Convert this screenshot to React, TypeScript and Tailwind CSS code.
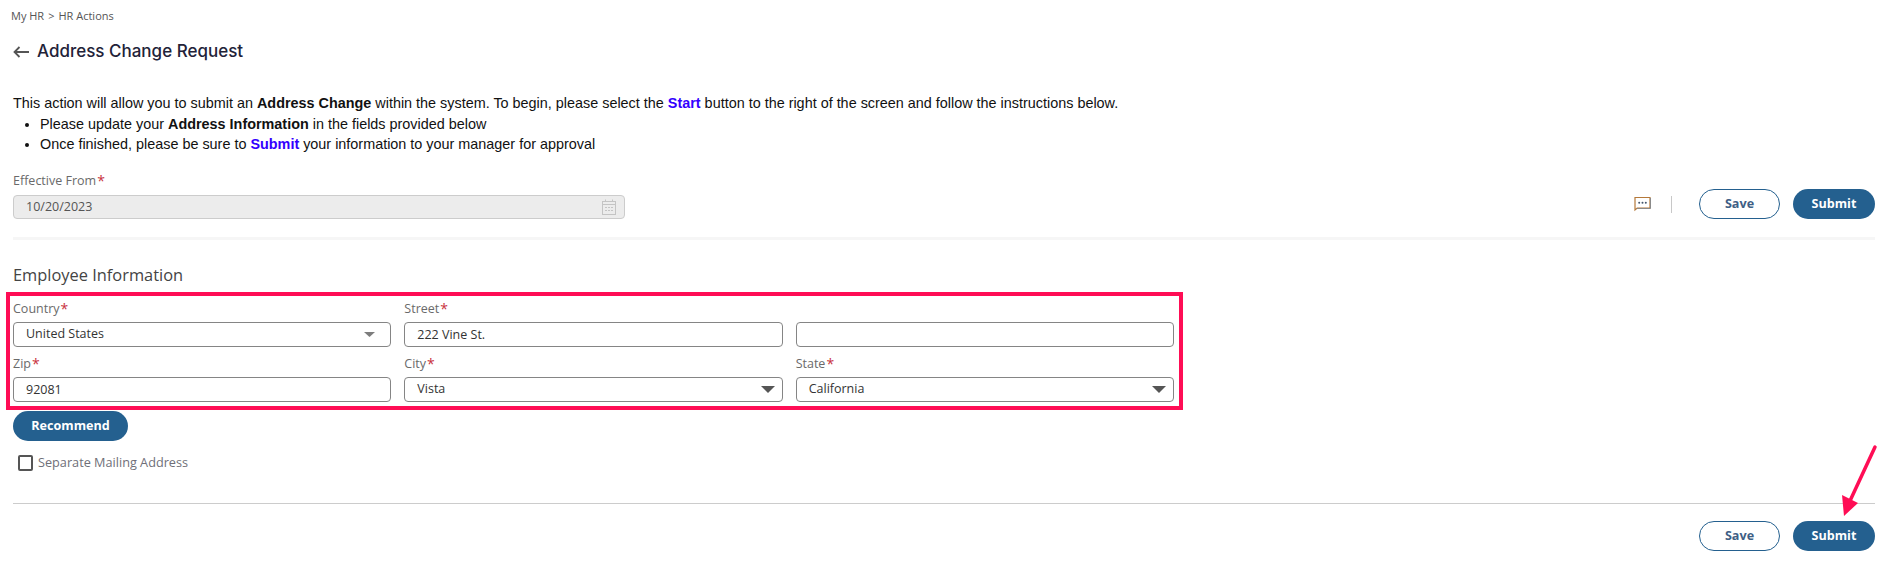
const labelCls = "h-[16px] pt-[2px] flex items-center text-[12.5px] text-[#6a6a6a] font-['Open_Sans',sans-serif]";
const boxCls =
  "h-[25px] w-full rounded-[4px] border border-[#858585] bg-white pl-[12px] pr-[7px] text-[12.5px] text-[#333] font-['Open_Sans',sans-serif] outline-none";

function Label({ text }: { text: string }) {
  return (
    <div className={labelCls}>
      {text}
      <span className="ml-[1px] text-[14px] leading-none text-[#c8323c]">*</span>
    </div>
  );
}

function TextField({ label, value }: { label?: string; value: string }) {
  return (
    <div className="flex flex-col gap-[6px]">
      {label ? <Label text={label} /> : <div className="h-[16px]" />}
      <input readOnly title={label ?? "street2"} value={value} className={boxCls} />
    </div>
  );
}

function SelectField({ label, value, small }: { label: string; value: string; small?: boolean }) {
  return (
    <div className="flex flex-col gap-[6px]">
      <Label text={label} />
      <div className={`${boxCls} flex items-center justify-between`}>
        <span>{value}</span>
        {small ? (
          <svg width="11" height="5" viewBox="0 0 11 5" className="mr-[8px]">
            <polygon points="0,0 11,0 5.5,5" fill="#7d7d7d" />
          </svg>
        ) : (
          <svg width="14" height="7" viewBox="0 0 14 7">
            <polygon points="0,0 14,0 7,7" fill="#555555" />
          </svg>
        )}
      </div>
    </div>
  );
}

function ActionButtons() {
  return (
    <div className="flex items-center gap-[13px] font-['Open_Sans',sans-serif] text-[12.6px] font-bold">
      <button className="h-[30px] w-[81px] rounded-full border border-[#24608f] bg-white text-[#3f5f85]">
        Save
      </button>
      <button className="h-[30px] w-[82px] rounded-full bg-[#24608f] text-white">Submit</button>
    </div>
  );
}

export default function App() {
  return (
    <div className="relative h-[584px] overflow-hidden bg-white pl-[13px] pr-[20px] pt-[8px]">
      <div className="h-[16px] flex items-center gap-[4px] text-[11px] text-[#555] font-['Open_Sans',sans-serif] -ml-[2px]">
        <span>My HR</span>
        <span>&gt;</span>
        <span>HR Actions</span>
      </div>

      <div className="mt-[16px] flex h-[24px] items-center gap-[8px]">
        <svg width="16" height="12" viewBox="0 0 16 12" fill="none" stroke="#555555" strokeWidth="1.8">
          <path d="M16 6H1.5M6.5 1 1.5 6l5 5" />
        </svg>
        <h1 className="text-[17px] font-medium text-[#222238] font-['Inter',sans-serif]">
          Address Change Request
        </h1>
      </div>

      <div className="mt-[29px] text-[14.4px] leading-[20.5px] text-[#111] font-['Liberation_Sans',sans-serif]">
        <p>
          This action will allow you to submit an <b>Address Change</b> within the system. To begin,
          please select the <b className="text-[#3300ff]">Start</b> button to the right of the screen
          and follow the instructions below.
        </p>
        <ul className="list-disc pl-[27px]">
          <li>
            Please update your <b>Address Information</b> in the fields provided below
          </li>
          <li>
            Once finished, please be sure to <b className="text-[#3300ff]">Submit</b> your
            information to your manager for approval
          </li>
        </ul>
      </div>

      <div className="mt-[17.5px] flex items-end justify-between">
        <div className="flex w-[612px] flex-col gap-[7px]">
          <Label text="Effective From" />
          <div className={`${boxCls} flex items-center justify-between !h-[24px] !border-[#cccccc] !bg-[#ececec] !pr-[8px] text-[#555]`}>
            <span>10/20/2023</span>
            <svg width="14" height="16" viewBox="0 0 14 16" fill="none" stroke="#c4c4c4">
              <rect x="0.5" y="2.5" width="13" height="13" />
              <path d="M0.5 5.5h13M3.5 0.5v2M10.5 0.5v2" />
              <path d="M3 8.5h2M6 8.5h2M9 8.5h2M3 11.5h2M6 11.5h2M9 11.5h2" />
            </svg>
          </div>
        </div>
        <div className="flex items-center">
          <svg width="17" height="16" viewBox="0 0 17 16" fill="none" className="mr-[20px]">
            <path d="M1 14V1.5h15V12H3.2L1 14z" stroke="#b5793a" strokeWidth="1.2" />
            <path d="M3 12.5h13.5V2" stroke="#8a8a8a" strokeWidth="1" />
            <circle cx="5.2" cy="6.8" r="1" fill="#44566c" />
            <circle cx="8.5" cy="6.8" r="1" fill="#44566c" />
            <circle cx="11.8" cy="6.8" r="1" fill="#44566c" />
          </svg>
          <div className="mr-[27px] h-[17px] w-px bg-[#c8c8c8]" />
          <ActionButtons />
        </div>
      </div>

      <div className="mt-[18px] h-[3px] bg-[#f6f6f6]" />

      <h2 className="mt-[23px] flex h-[24px] items-center text-[16.4px] text-[#444] font-['Open_Sans',sans-serif]">
        Employee Information
      </h2>

      <div className="relative mt-[13px] grid w-[1161px] grid-cols-3 gap-x-[13px] gap-y-[8px]">
        <SelectField label="Country" value="United States" small />
        <TextField label="Street" value="222 Vine St." />
        <TextField value="" />
        <TextField label="Zip" value="92081" />
        <SelectField label="City" value="Vista" />
        <SelectField label="State" value="California" />
        <div className="pointer-events-none absolute -left-[7px] -right-[9px] -top-[8px] -bottom-[8px] border-[4px] border-[#ff0d55]" />
      </div>

      <button className="mt-[9px] block h-[30px] w-[115px] rounded-full bg-[#24608f] text-[12.6px] font-bold text-white font-['Open_Sans',sans-serif]">
        Recommend
      </button>

      <label className="mt-[14px] ml-[5px] flex h-[16px] items-center gap-[5px] text-[12.7px] text-[#6f6f78] font-['Open_Sans',sans-serif]">
        <span className="h-[16px] w-[15px] rounded-[2px] border-2 border-[#555]" />
        Separate Mailing Address
      </label>

      <div className="mt-[32px] h-px bg-[#cccccc]" />

      <div className="mt-[17px] flex justify-end">
        <ActionButtons />
      </div>

      {/* annotation arrow pointing at the bottom submit */}
      <svg width="40" height="78" viewBox="0 0 40 78" className="absolute left-[1840px] top-[443px]" fill="none">
        <path d="M35 4 L9 60" stroke="#ff0d55" strokeWidth="3.5" strokeLinecap="round" />
        <polygon points="4,73 2,52 18,60" fill="#ff0d55" />
      </svg>
    </div>
  );
}
